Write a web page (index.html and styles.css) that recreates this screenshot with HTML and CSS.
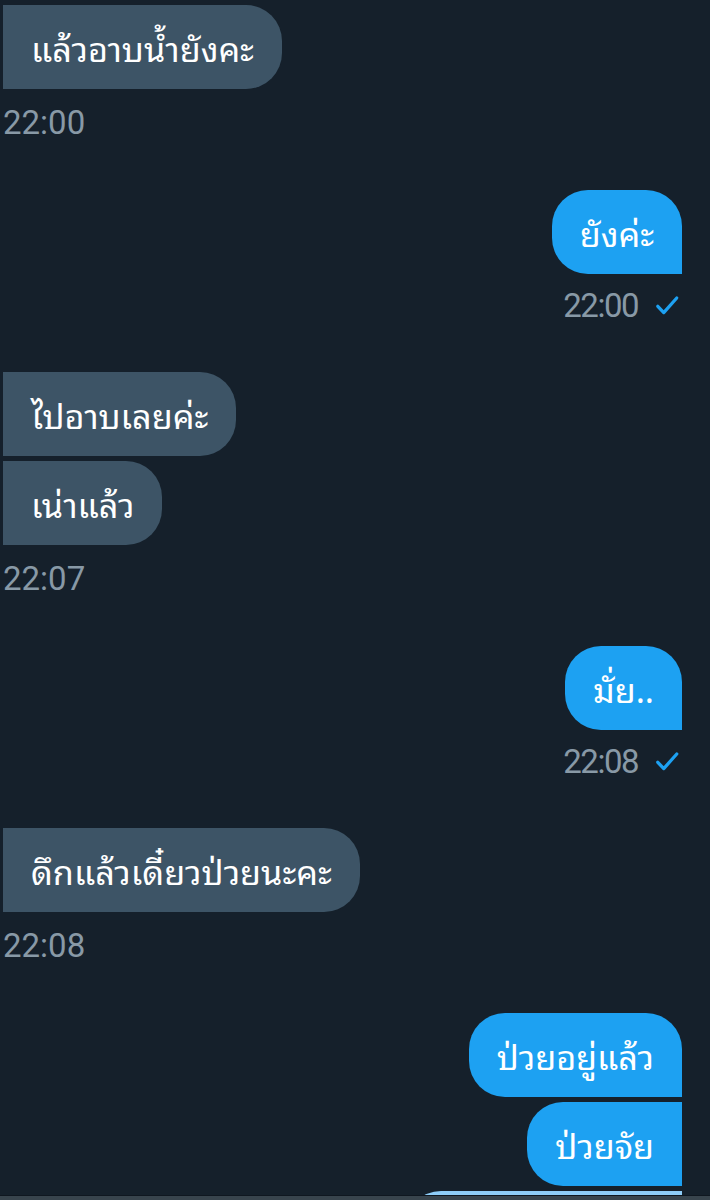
FILE: index.html
```html
<!DOCTYPE html>
<html lang="th">
<head>
<meta charset="utf-8">
<title>Messages</title>
<link rel="stylesheet" href="styles.css">
</head>
<body>
<div class="screen">
  <div class="thread">
    <div class="group in">
      <div class="bubble">แล้วอาบน้ำยังคะ</div>
      <div class="ts">22:00</div>
    </div>
    <div class="group out">
      <div class="bubble first">ยังค่ะ</div>
      <div class="ts">22:00
        <svg class="check" viewBox="0 0 24 24" width="26" height="26"><path d="M3.5 13.2 L9 19 L21 5.5" fill="none" stroke="#1da1f2" stroke-width="3" stroke-linecap="round" stroke-linejoin="round"/></svg>
      </div>
    </div>
    <div class="group in">
      <div class="bubble">ไปอาบเลยค่ะ</div>
      <div class="bubble">เน่าแล้ว</div>
      <div class="ts">22:07</div>
    </div>
    <div class="group out">
      <div class="bubble first">มั่ย..</div>
      <div class="ts">22:08
        <svg class="check" viewBox="0 0 24 24" width="26" height="26"><path d="M3.5 13.2 L9 19 L21 5.5" fill="none" stroke="#1da1f2" stroke-width="3" stroke-linecap="round" stroke-linejoin="round"/></svg>
      </div>
    </div>
    <div class="group in">
      <div class="bubble">ดึกแล้วเดี๋ยวป่วยนะคะ</div>
      <div class="ts">22:08</div>
    </div>
    <div class="group out">
      <div class="bubble first">ป่วยอยู่แล้ว</div>
      <div class="bubble">ป่วยจัย</div>
      <div class="bubble pale"></div>
    </div>
  </div>
  <div class="composer-edge"></div>
</div>
</body>
</html>
```
FILE: styles.css
```css
html, body {
  margin: 0;
  padding: 0;
  background: #15202b;
}
body {
  font-family: "Noto Sans Thai Looped", "Noto Sans Thai", Loma, Garuda, Roboto, "Noto Sans", sans-serif;
  color: #ffffff;
}
.screen {
  width: 710px;
  height: 1200px;
  display: flex;
  flex-direction: column;
  overflow: hidden;
}
.thread {
  flex: 1;
  overflow: hidden;
  padding: 5px 28px 0 3px;
  display: flex;
  flex-direction: column;
}
.group {
  display: flex;
  flex-direction: column;
  gap: 5px;
  flex-shrink: 0;
}
.group.in {
  align-items: flex-start;
  margin-bottom: 48px;
}
.group.out {
  align-items: flex-end;
  margin-bottom: 47px;
}
.bubble {
  height: 84px;
  box-sizing: border-box;
  padding: 0 28px;
  display: flex;
  align-items: center;
  font-size: 34.2px;
  line-height: 1;
  white-space: nowrap;
  flex-shrink: 0;
}
.in .bubble {
  background: #3d5466;
  border-radius: 0 36px 36px 0;
}
.out .bubble {
  background: #1da1f2;
  border-radius: 36px 0 0 36px;
}
.out .bubble.first {
  border-radius: 36px 36px 0 36px;
}
.out .bubble.pale {
  background: #8ecdf8;
  width: 277px;
}
.ts {
  margin-top: 8px;
  height: 40px;
  display: flex;
  align-items: center;
  gap: 16px;
  font-family: Roboto, "Liberation Sans", sans-serif;
  font-size: 33px;
  color: #8899a6;
}
.out .ts {
  margin-top: 6px;
  padding-right: 2px;
  letter-spacing: -1.5px;
}
.check {
  display: block;
}
.composer-edge {
  height: 4px;
  border-top: 1px solid #0f1720;
  background: #38444d;
  flex-shrink: 0;
}
```
